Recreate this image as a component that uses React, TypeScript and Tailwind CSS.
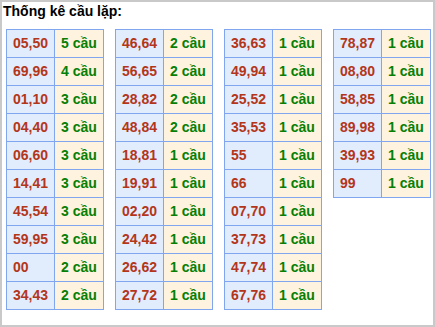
const GROUPS: [string, number][][] = [
  [
    ["05,50", 5],
    ["69,96", 4],
    ["01,10", 3],
    ["04,40", 3],
    ["06,60", 3],
    ["14,41", 3],
    ["45,54", 3],
    ["59,95", 3],
    ["00", 2],
    ["34,43", 2],
  ],
  [
    ["46,64", 2],
    ["56,65", 2],
    ["28,82", 2],
    ["48,84", 2],
    ["18,81", 1],
    ["19,91", 1],
    ["02,20", 1],
    ["24,42", 1],
    ["26,62", 1],
    ["27,72", 1],
  ],
  [
    ["36,63", 1],
    ["49,94", 1],
    ["25,52", 1],
    ["35,53", 1],
    ["55", 1],
    ["66", 1],
    ["07,70", 1],
    ["37,73", 1],
    ["47,74", 1],
    ["67,76", 1],
  ],
  [
    ["78,87", 1],
    ["08,80", 1],
    ["58,85", 1],
    ["89,98", 1],
    ["39,93", 1],
    ["99", 1],
  ],
];

function PairTable({ rows }: { rows: [string, number][] }) {
  return (
    <div className="flex w-[98px] flex-col border-l border-t border-[#80a6f0]">
      {rows.map(([pair, count]) => (
        <div key={pair} className="flex h-[28px]">
          <div className="flex w-[48px] items-center border-b border-r border-[#80a6f0] bg-[#e1ecfd] pl-[6px] text-[#b3361a]">
            {pair}
          </div>
          <div className="flex w-[49px] items-center border-b border-r border-[#80a6f0] bg-[#fef3df] pl-[6px] text-[#067f06]">
            {count} cầu
          </div>
        </div>
      ))}
    </div>
  );
}

export default function App() {
  return (
    <div className="h-[327px] w-[435px] border-2 border-[#c9c9c9] bg-white font-['Liberation_Sans',Arial,sans-serif] font-bold">
      <div className="pl-[1px] pt-[1px] text-[14px] leading-[16px] text-black">
        Thống kê cầu lặp:
      </div>
      <div className="mt-[10px] flex items-start gap-[11px] pl-[4px] text-[14px]">
        {GROUPS.map((rows, i) => (
          <PairTable key={i} rows={rows} />
        ))}
      </div>
    </div>
  );
}
